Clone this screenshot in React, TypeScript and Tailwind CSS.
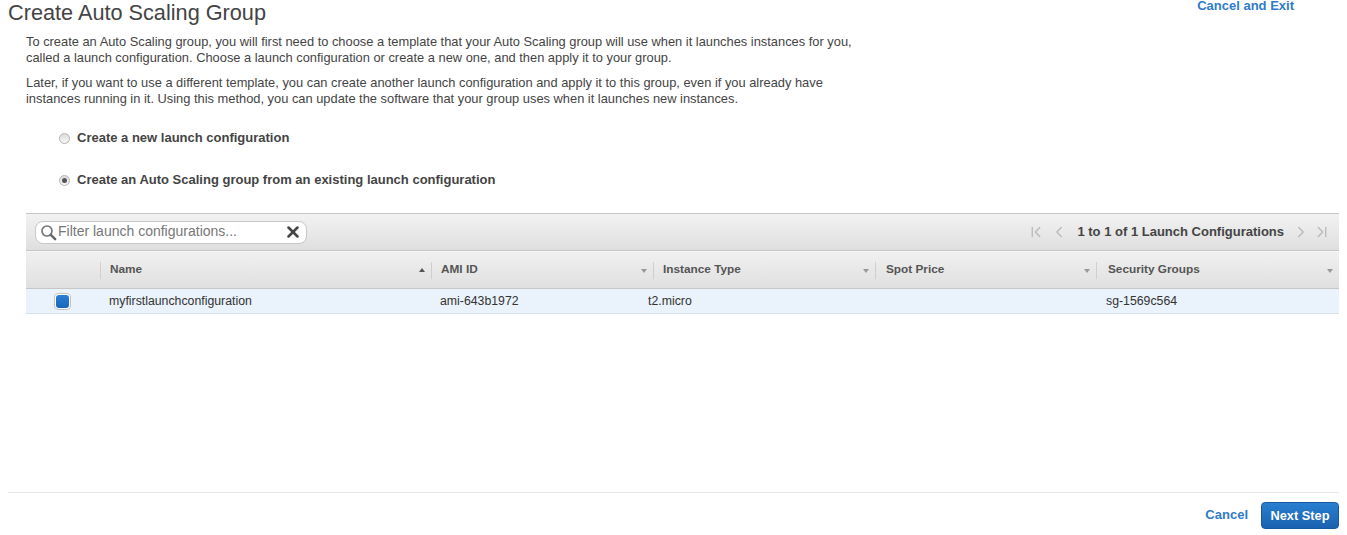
import { ChevronLeft, ChevronRight, ChevronFirst, ChevronLast, X } from "lucide-react"

const columns = [
  { label: "Name", width: "w-[331px]", ml: "ml-[9px]", up: true },
  { label: "AMI ID", width: "w-[222px]", ml: "ml-[9px]" },
  { label: "Instance Type", width: "w-[222px]", ml: "ml-[9px]" },
  { label: "Spot Price", width: "w-[221px]", ml: "ml-[10px]" },
  { label: "Security Groups", width: "w-[243px]", ml: "ml-[11px]" },
]

function Radio({ checked }: { checked?: boolean }) {
  return (
    <span className="flex h-[11px] w-[11px] items-center justify-center rounded-full border border-[#b5b5b5] bg-gradient-to-b from-[#dcdcdc] to-[#f7f7f7]">
      {checked && <span className="h-[5px] w-[5px] rounded-full bg-[#555]" />}
    </span>
  )
}

function SearchIcon() {
  return (
    <svg viewBox="0 0 17 17" className="h-[17px] w-[17px] shrink-0" fill="none">
      <circle cx="7" cy="7" r="5" stroke="#777" strokeWidth="1.7" />
      <path d="M10.8 10.8 15.2 15.2" stroke="#666" strokeWidth="2.4" strokeLinecap="round" />
    </svg>
  )
}

export default function App() {
  return (
    <div className="relative h-[535px] w-[1347px] overflow-hidden bg-white font-['Liberation_Sans',Arial,sans-serif] text-[#444]">
      <div className="flex items-start justify-between pl-2 pr-[53px]">
        <h1 className="text-[21.7px] leading-[26px] text-[#444]">Create Auto Scaling Group</h1>
        <a className="text-[13px] font-bold leading-[11px] text-[#2f7bc8]">Cancel and Exit</a>
      </div>

      <div className="mt-[8px] pl-[26px] text-[12.87px] leading-[16px] text-[#444]">
        <p>
          To create an Auto Scaling group, you will first need to choose a template that your Auto Scaling group will use when it launches instances for you,
          <br />
          called a launch configuration. Choose a launch configuration or create a new one, and then apply it to your group.
        </p>
        <p className="mt-[9px]">
          Later, if you want to use a different template, you can create another launch configuration and apply it to this group, even if you already have
          <br />
          instances running in it. Using this method, you can update the software that your group uses when it launches new instances.
        </p>
      </div>

      <div className="mt-[23px] flex items-center gap-[7px] pl-[59px] text-[13px] font-bold leading-[16px]">
        <Radio />
        <span>Create a new launch configuration</span>
      </div>
      <div className="mt-[26px] flex items-center gap-[7px] pl-[59px] text-[13px] font-bold leading-[16px]">
        <Radio checked />
        <span>Create an Auto Scaling group from an existing launch configuration</span>
      </div>

      <div className="ml-[26px] mt-[25px] w-[1313px]">
        <div className="flex h-[38px] items-center justify-between border-y border-[#c6c6c6] bg-gradient-to-b from-[#f2f2f2] to-[#dfdfdf] pl-[9px] pr-[8px]">
          <div className="flex h-[23px] w-[272px] items-center rounded-[8px] border border-[#c8c8c8] bg-white pl-[4px] pr-[4px]">
            <SearchIcon />
            <span className="mb-[2px] ml-[1px] flex-1 text-[14px] leading-[16px] text-[#777]">Filter launch configurations...</span>
            <X className="h-[18px] w-[18px] shrink-0 text-[#444]" strokeWidth={3.4} />
          </div>
          <div className="flex items-center text-[#b8b8b8]">
            <ChevronFirst className="h-[18px] w-[18px]" strokeWidth={1.7} />
            <ChevronLeft className="ml-[5px] h-[18px] w-[18px]" strokeWidth={1.7} />
            <span className="ml-[9px] text-[13px] font-bold leading-[16px] text-[#444]">1 to 1 of 1 Launch Configurations</span>
            <ChevronRight className="ml-[8px] h-[18px] w-[18px]" strokeWidth={1.7} />
            <ChevronLast className="ml-[3px] h-[18px] w-[18px]" strokeWidth={1.7} />
          </div>
        </div>

        <div className="flex h-[38px] border-b border-t border-b-[#c6c6c6] border-t-[#f7f7f7] bg-gradient-to-b from-[#f0f0f0] to-[#e0e0e0] pl-[74px] text-[11.8px] font-bold text-[#555]">
          {columns.map((c) => (
            <div key={c.label} className={`${c.width} relative flex items-center`}>
              <span className="h-[17px] w-px bg-[#cfcfcf]" />
              <span className={c.ml}>{c.label}</span>
              {c.up ? (
                <span className="absolute right-[6px] top-[16px] h-0 w-0 border-x-[3.5px] border-b-[4px] border-x-transparent border-b-[#555]" />
              ) : (
                <span className="absolute right-[6px] top-[17px] h-0 w-0 border-x-[3.5px] border-t-[4px] border-x-transparent border-t-[#999]" />
              )}
            </div>
          ))}
        </div>

        <div className="flex h-[25px] items-center border-b border-[#d9dfe6] bg-[#eaf2fc] text-[12.3px] text-[#333]">
          <span className="ml-[28px] flex h-[17px] w-[17px] items-center justify-center rounded-[4px] border border-[#c4c4c4] bg-white">
            <span className="h-[13px] w-[13px] rounded-[3px] bg-gradient-to-b from-[#2a7fd6] to-[#1a66b8]" />
          </span>
          <span className="ml-[38px] w-[331px]">myfirstlaunchconfiguration</span>
          <span className="w-[208px]">ami-643b1972</span>
          <span className="w-[458px]">t2.micro</span>
          <span>sg-1569c564</span>
        </div>
      </div>

      <div className="ml-2 mt-[178px] flex h-[43px] w-[1331px] items-center justify-end border-t border-[#e6e6e6] pt-[3px]">
        <a className="mb-[2px] mr-[13px] text-[13px] font-bold text-[#2f7bc8]">Cancel</a>
        <button className="h-[27px] w-[78px] rounded-[4px] border border-[#15599f] bg-gradient-to-b from-[#2a7fd0] to-[#1a62b0] text-[12.8px] font-bold text-white">
          Next Step
        </button>
      </div>
    </div>
  )
}
